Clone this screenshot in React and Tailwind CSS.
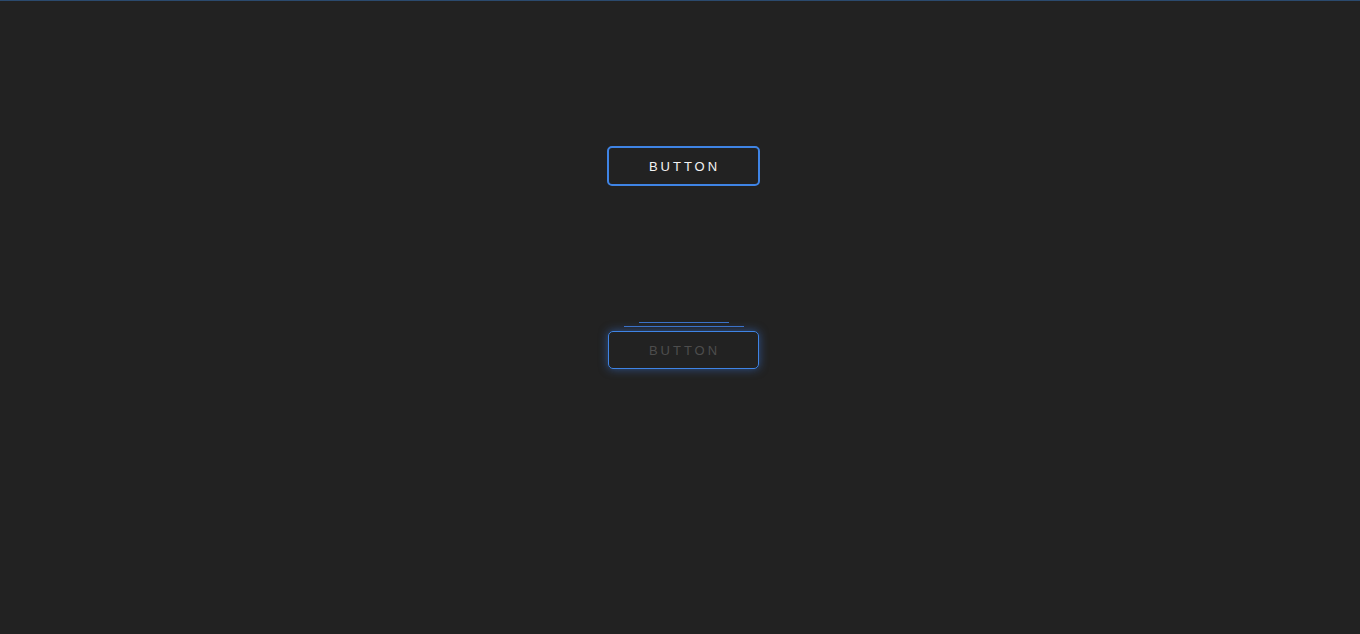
export default function App() {
  return (
    <div className="min-h-screen w-full bg-[#222222] border-t border-[#2b4a6e] flex flex-col items-center pl-[7px]" style={{ minHeight: 634 }}>
      <button className="mt-[145px] w-[153px] h-[40px] border-2 border-[#3f84e5] rounded-[5px] bg-transparent text-[#f4f4f4] text-[13px] tracking-[3px] font-['Liberation_Sans',sans-serif] flex items-center justify-center pl-[2px] pt-[2px]">
        BUTTON
      </button>
      <div className="relative mt-[145px]">
        <div className="absolute left-1/2 -translate-x-1/2 top-[-9px] w-[90px] h-px bg-[#3b72c8]" />
        <div className="absolute left-1/2 -translate-x-1/2 top-[-5px] w-[120px] h-px bg-[#3b72c8]" />
        <button className="w-[151px] h-[38px] border border-[#3f84e5] rounded-[5px] bg-transparent text-[#4d4d4d] text-[13px] tracking-[3px] font-['Liberation_Sans',sans-serif] flex items-center justify-center pl-[2px] pt-[2px] shadow-[0_0_10px_rgba(59,130,246,0.5)]">
          BUTTON
        </button>
      </div>
    </div>
  );
}
